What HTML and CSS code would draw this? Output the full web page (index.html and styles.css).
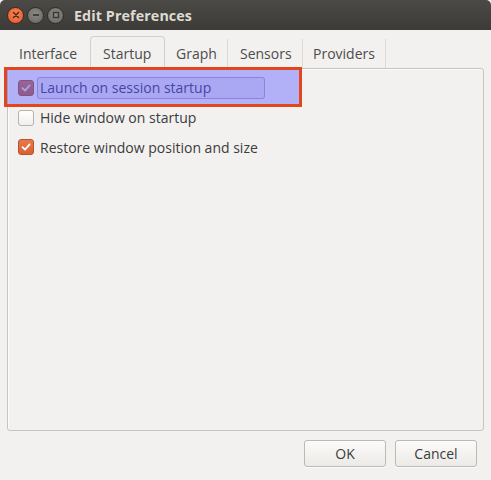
FILE: index.html
```html
<!DOCTYPE html>
<html>
<head>
<meta charset="utf-8">
<link rel="stylesheet" href="styles.css">
</head>
<body>
<div class="window">
  <div class="titlebar">
    <div class="wbtns">
      <span class="wbtn close"><svg width="8" height="8" viewBox="0 0 8 8"><path d="M1.5 1.5L6.5 6.5M6.5 1.5L1.5 6.5" stroke="#5a2a10" stroke-width="1.6" stroke-linecap="round"/></svg></span>
      <span class="wbtn"><svg width="10" height="10" viewBox="0 0 10 10"><path d="M2 5H8" stroke="#3a3935" stroke-width="1.8"/></svg></span>
      <span class="wbtn"><svg width="10" height="10" viewBox="0 0 10 10"><rect x="2.5" y="2.5" width="5" height="5" fill="none" stroke="#3a3935" stroke-width="1.4"/></svg></span>
    </div>
    <div class="title">Edit Preferences</div>
  </div>
  <div class="body">
    <div class="tabs">
      <div class="tab t-interface">Interface</div>
      <div class="tab active t-startup">Startup</div>
      <div class="tab t-graph">Graph</div>
      <div class="tab t-sensors">Sensors</div>
      <div class="tab t-providers">Providers</div>
    </div>
    <div class="panel">
      <div class="row hl">
        <span class="cb checked"><svg width="12" height="12" viewBox="0 0 12 12"><path d="M2.5 6.2L5 8.6L9.6 3.4" fill="none" stroke="#fff" stroke-width="1.8" stroke-linecap="round" stroke-linejoin="round"/></svg></span>
        <span class="lbl focus">Launch on session startup</span>
        <div class="overlay"></div>
      </div>
      <div class="row">
        <span class="cb"></span>
        <span class="lbl">Hide window on startup</span>
      </div>
      <div class="row">
        <span class="cb checked"><svg width="12" height="12" viewBox="0 0 12 12"><path d="M2.5 6.2L5 8.6L9.6 3.4" fill="none" stroke="#fff" stroke-width="1.8" stroke-linecap="round" stroke-linejoin="round"/></svg></span>
        <span class="lbl">Restore window position and size</span>
      </div>
    </div>
    <div class="actions">
      <button class="btn">OK</button>
      <button class="btn">Cancel</button>
    </div>
  </div>
</div>
</body>
</html>
```
FILE: styles.css
```css
html, body { margin: 0; padding: 0; }
body {
  width: 491px; height: 480px; overflow: hidden;
  background: #f2f1f0;
  font-family: "Open Sans", "Noto Sans", sans-serif;
  font-size: 14px;
  color: #3c3c3c;
}
.window { width: 491px; height: 480px; display: flex; flex-direction: column; }
.titlebar {
  height: 30px; flex: none;
  background: linear-gradient(#4b4a46, #3c3b37);
  display: flex; align-items: center;
  border-radius: 5px 5px 0 0;
}
.wbtns { display: flex; gap: 3px; padding-left: 7px; }
.wbtn {
  width: 17px; height: 17px; border-radius: 50%;
  background: radial-gradient(circle at 50% 40%, #8c8b86, #65645f);
  border: 1px solid #2e2d2a; box-sizing: border-box;
  display: flex; align-items: center; justify-content: center;
}
.wbtn.close { background: radial-gradient(circle at 50% 40%, #f78a5a, #e2512a); border-color: #4a2a18; }
.title { margin-left: 10px; font-weight: bold; color: #dfdbd2; font-size: 14.3px; letter-spacing: 0.1px; }
.body { flex: 1; display: flex; flex-direction: column; padding: 6px 7px 0 7px; }
.tabs { display: flex; height: 32px; align-items: flex-end; }
.tab {
  height: 29px; box-sizing: border-box; padding: 5px 0 0 12px;
  border-right: 1px solid #dcdad5; color: #4c4c4c;
}
.t-interface { width: 84px; }
.t-startup { width: 75px; }
.t-graph { width: 63px; padding-left: 11px; }
.t-sensors { width: 75px; }
.t-providers { width: 83px; padding-left: 10px; }
.tab.active {
  height: 32px; padding-top: 7px;
  border: 1px solid #d3d0cb; border-bottom: none; border-radius: 4px 4px 0 0;
  background: #f2f1f0; margin-left: -1px;
}
.panel {
  height: 363px; box-sizing: border-box;
  border: 1px solid #c8c5c0; border-radius: 0 3px 3px 3px;
  box-shadow: inset 1px 1px 0 #fbfbfa;
  padding-top: 9px;
  display: flex; flex-direction: column; gap: 9.5px;
}
.row { display: flex; align-items: center; height: 20px; padding-left: 10px; position: relative; }
.cb {
  width: 16px; height: 16px; box-sizing: border-box; border-radius: 3px;
  border: 1px solid #b6b3ad; background: linear-gradient(#ffffff, #f0efed);
  display: flex; align-items: center; justify-content: center; flex: none;
}
.cb.checked { background: linear-gradient(#e67a4c, #d9602e); border-color: #b8532a; }
.hl .cb.checked { filter: brightness(0.85); }
.lbl { margin-left: 6px; }
.lbl.focus {
  margin-left: 3px; padding: 0 53px 0 2px; height: 20px; line-height: 20px;
  border: 1px solid rgba(110, 70, 150, 0.45); border-radius: 3px;
  background: rgba(140, 110, 190, 0.12);
}
.overlay {
  position: absolute; left: -4px; top: -11px; width: 292px; height: 34px;
  background: rgba(100, 100, 255, 0.45);
  border: 3px solid #e2461d;
}
.hl { color: #2c2c5a; }
.actions { display: flex; justify-content: flex-end; gap: 9px; padding: 9px 7px 0 0; }
.btn {
  width: 82px; height: 27px;
  font-family: inherit; font-size: 14px; color: #3c3c3c;
  border: 1px solid #bdbab4; border-radius: 3px;
  background: linear-gradient(#fbfbfa, #eceae7);
  box-shadow: 0 1px 0 rgba(255,255,255,0.8);
}
```
